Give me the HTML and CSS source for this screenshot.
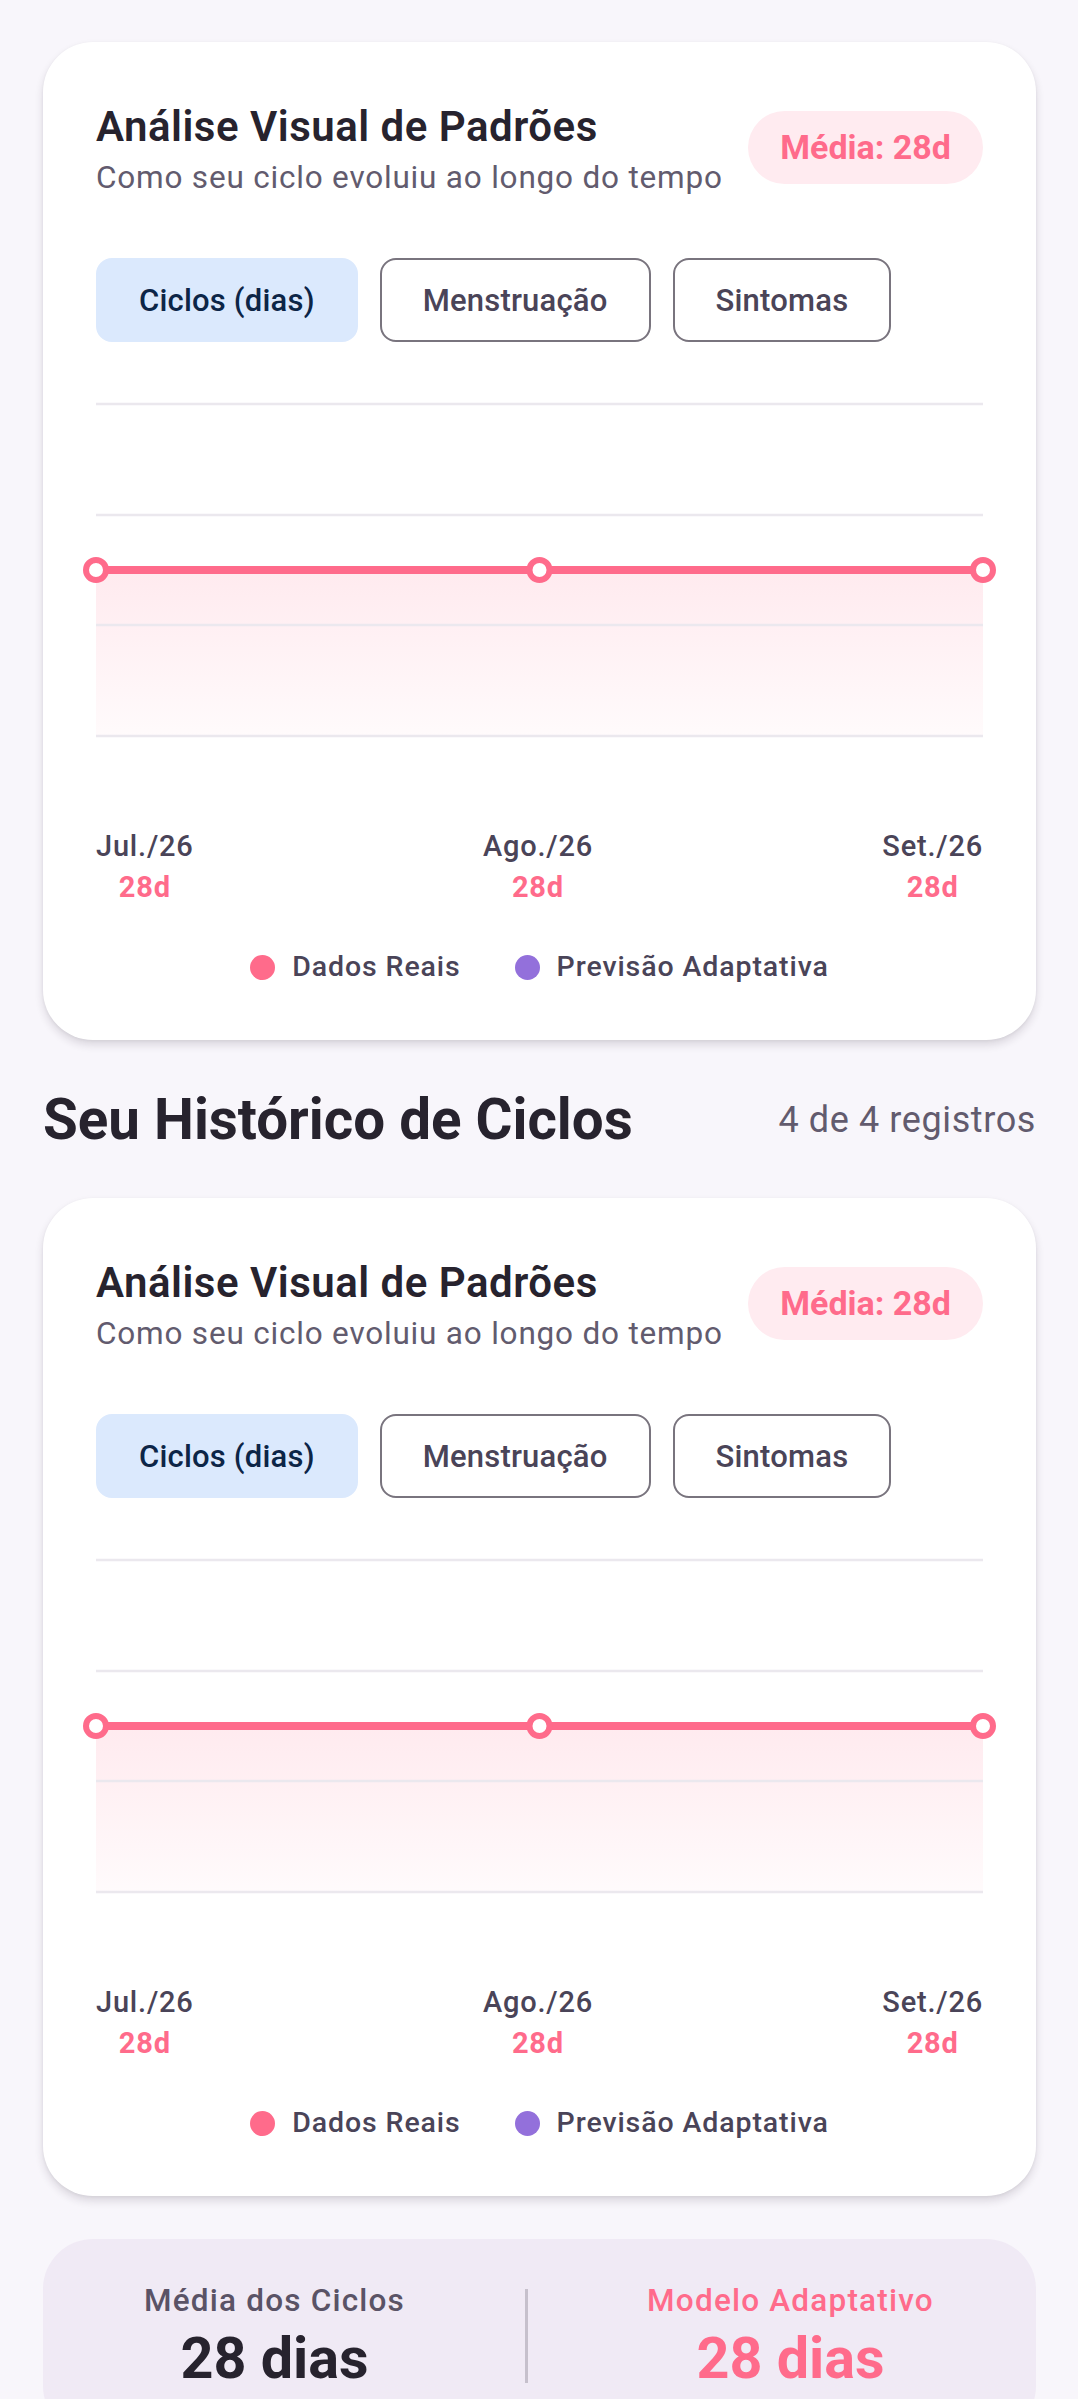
FILE: index.html
```html
<!DOCTYPE html>
<html lang="pt-BR">
<head>
<meta charset="utf-8">
<title>Histórico de Ciclos</title>
<link rel="stylesheet" href="styles.css">
</head>
<body>
<main class="page">
  <section class="card">
    <div class="card-head">
      <div class="head-text">
        <h2 class="card-title">Análise Visual de Padrões</h2>
        <p class="card-sub">Como seu ciclo evoluiu ao longo do tempo</p>
      </div>
      <span class="badge">Média: 28d</span>
    </div>
    <div class="tabs">
      <button class="tab tab-active">Ciclos (dias)</button>
      <button class="tab">Menstruação</button>
      <button class="tab">Sintomas</button>
    </div>
    <svg class="chart" xmlns="http://www.w3.org/2000/svg">
      <defs>
        <linearGradient id="fillA" x1="0" y1="0" x2="0" y2="1">
          <stop offset="0" stop-color="#FF6B8B" stop-opacity="0.14"/>
          <stop offset="1" stop-color="#FF6B8B" stop-opacity="0.03"/>
        </linearGradient>
      </defs>
      <rect x="0" y="170" width="100%" height="166" fill="url(#fillA)"/>
      <line class="grid" x1="0" x2="100%" y1="4" y2="4"/>
      <line class="grid" x1="0" x2="100%" y1="115" y2="115"/>
      <line class="grid" x1="0" x2="100%" y1="225" y2="225"/>
      <line class="grid" x1="0" x2="100%" y1="336" y2="336"/>
      <line class="series" x1="0" x2="100%" y1="170" y2="170"/>
      <circle class="point" cx="0" cy="170" r="10"/>
      <circle class="point" cx="50%" cy="170" r="10"/>
      <circle class="point" cx="100%" cy="170" r="10"/>
    </svg>
    <div class="axis">
      <div class="tick"><span class="tick-label">Jul./26</span><span class="tick-val">28d</span></div>
      <div class="tick"><span class="tick-label">Ago./26</span><span class="tick-val">28d</span></div>
      <div class="tick"><span class="tick-label">Set./26</span><span class="tick-val">28d</span></div>
    </div>
    <div class="legend">
      <span class="legend-item"><span class="dot dot-real"></span>Dados Reais</span>
      <span class="legend-item"><span class="dot dot-pred"></span>Previsão Adaptativa</span>
    </div>
  </section>

  <div class="section-head">
    <h1 class="section-title">Seu Histórico de Ciclos</h1>
    <span class="section-count">4 de 4 registros</span>
  </div>

  <section class="card">
    <div class="card-head">
      <div class="head-text">
        <h2 class="card-title">Análise Visual de Padrões</h2>
        <p class="card-sub">Como seu ciclo evoluiu ao longo do tempo</p>
      </div>
      <span class="badge">Média: 28d</span>
    </div>
    <div class="tabs">
      <button class="tab tab-active">Ciclos (dias)</button>
      <button class="tab">Menstruação</button>
      <button class="tab">Sintomas</button>
    </div>
    <svg class="chart" xmlns="http://www.w3.org/2000/svg">
      <defs>
        <linearGradient id="fillB" x1="0" y1="0" x2="0" y2="1">
          <stop offset="0" stop-color="#FF6B8B" stop-opacity="0.14"/>
          <stop offset="1" stop-color="#FF6B8B" stop-opacity="0.03"/>
        </linearGradient>
      </defs>
      <rect x="0" y="170" width="100%" height="166" fill="url(#fillB)"/>
      <line class="grid" x1="0" x2="100%" y1="4" y2="4"/>
      <line class="grid" x1="0" x2="100%" y1="115" y2="115"/>
      <line class="grid" x1="0" x2="100%" y1="225" y2="225"/>
      <line class="grid" x1="0" x2="100%" y1="336" y2="336"/>
      <line class="series" x1="0" x2="100%" y1="170" y2="170"/>
      <circle class="point" cx="0" cy="170" r="10"/>
      <circle class="point" cx="50%" cy="170" r="10"/>
      <circle class="point" cx="100%" cy="170" r="10"/>
    </svg>
    <div class="axis">
      <div class="tick"><span class="tick-label">Jul./26</span><span class="tick-val">28d</span></div>
      <div class="tick"><span class="tick-label">Ago./26</span><span class="tick-val">28d</span></div>
      <div class="tick"><span class="tick-label">Set./26</span><span class="tick-val">28d</span></div>
    </div>
    <div class="legend">
      <span class="legend-item"><span class="dot dot-real"></span>Dados Reais</span>
      <span class="legend-item"><span class="dot dot-pred"></span>Previsão Adaptativa</span>
    </div>
  </section>

  <section class="stats">
    <div class="stat">
      <span class="stat-label">Média dos Ciclos</span>
      <span class="stat-value">28 dias</span>
    </div>
    <span class="stat-divider"></span>
    <div class="stat stat-accent">
      <span class="stat-label">Modelo Adaptativo</span>
      <span class="stat-value">28 dias</span>
    </div>
  </section>
</main>
</body>
</html>
```

FILE: styles.css
```css
* {
  box-sizing: border-box;
}

html, body {
  margin: 0;
  padding: 0;
  background: #F8F6FB;
}

body {
  font-family: Roboto, "Noto Sans", "Liberation Sans", sans-serif;
  color: #1D1B20;
}

.page {
  padding: 42px 42px 0 43px;
  display: flex;
  flex-direction: column;
}

.card {
  background: #FFFFFF;
  border-radius: 50px;
  padding: 60px 53px 56px;
  box-shadow: 0 5px 8px rgba(40, 30, 50, 0.14), 0 1px 3px rgba(40, 30, 50, 0.06);
  display: flex;
  flex-direction: column;
}

.card-head {
  display: flex;
  justify-content: space-between;
  align-items: flex-start;
}

.head-text {
  display: flex;
  flex-direction: column;
}

.card-title {
  margin: 0;
  font-size: 42px;
  line-height: 50px;
  font-weight: 600;
  letter-spacing: 0.5px;
  color: #27232E;
}

.card-sub {
  margin: 7px 0 0;
  font-size: 31.5px;
  line-height: 38px;
  font-weight: 400;
  letter-spacing: 0.8px;
  color: #625B6E;
}

.badge {
  margin-top: 9px;
  height: 73px;
  line-height: 73px;
  padding: 0 32px;
  border-radius: 37px;
  background: #FFEBF0;
  color: #FF6B8B;
  font-size: 34px;
  font-weight: 700;
  white-space: nowrap;
}

.tabs {
  margin-top: 61px;
  display: flex;
  gap: 22px;
}

.tab {
  height: 84px;
  padding: 0 41px;
  border-radius: 16px;
  border: 2.5px solid #79747E;
  background: #FFFFFF;
  font-family: inherit;
  font-size: 31px;
  font-weight: 500;
  color: #4A4458;
  letter-spacing: 0.2px;
}

.tab-active {
  border-color: #DBE9FD;
  background: #DBE9FD;
  color: #0C2547;
}

.chart {
  display: block;
  margin-top: 58px;
  width: 100%;
  height: 340px;
  overflow: visible;
}

.grid {
  stroke: #EBE8EE;
  stroke-width: 2.5;
}

.series {
  stroke: #FF6B8B;
  stroke-width: 8;
}

.point {
  fill: #FFFFFF;
  stroke: #FF6B8B;
  stroke-width: 6;
}

.axis {
  margin-top: 89px;
  display: flex;
  justify-content: space-between;
}

.tick {
  display: flex;
  flex-direction: column;
  align-items: center;
}

.tick-label {
  font-size: 29px;
  line-height: 34px;
  font-weight: 500;
  letter-spacing: 0.8px;
  color: #4A4458;
}

.tick-val {
  margin-top: 7px;
  font-size: 29px;
  line-height: 34px;
  font-weight: 700;
  letter-spacing: 0.8px;
  color: #FF6B8B;
}

.legend {
  margin-top: 46px;
  display: flex;
  justify-content: center;
  gap: 54px;
}

.legend-item {
  display: flex;
  align-items: center;
  gap: 17px;
  font-size: 28.5px;
  line-height: 34px;
  font-weight: 500;
  letter-spacing: 0.9px;
  color: #4A4458;
}

.dot {
  width: 25px;
  height: 25px;
  border-radius: 50%;
}

.dot-real {
  background: #FF6B8B;
}

.dot-pred {
  background: #9370DB;
}

.section-head {
  margin-top: 48px;
  margin-bottom: 46px;
  display: flex;
  justify-content: space-between;
  align-items: center;
}

.section-title {
  margin: 0;
  font-size: 56.5px;
  line-height: 64px;
  font-weight: 700;
  color: #27232E;
}

.section-count {
  font-size: 36px;
  line-height: 42px;
  letter-spacing: 0.6px;
  color: #625B6E;
}

.stats {
  margin-top: 43px;
  background: #F0EAF5;
  border-radius: 50px;
  padding: 43px 49px 46px 35px;
  display: flex;
  align-items: center;
}

.stat {
  flex: 1;
  display: flex;
  flex-direction: column;
  align-items: center;
}

.stat-label {
  font-size: 31.5px;
  line-height: 38px;
  font-weight: 500;
  color: #5A5366;
  letter-spacing: 1.2px;
}

.stat-value {
  margin-top: 8px;
  font-size: 57.5px;
  line-height: 62px;
  font-weight: 700;
  color: #27232E;
}

.stat-accent .stat-label,
.stat-accent .stat-value {
  color: #FF6B8B;
}

.stat-divider {
  width: 3px;
  height: 94px;
  background: #C6C0CC;
  margin: 0 66px 0 54px;
}
```
